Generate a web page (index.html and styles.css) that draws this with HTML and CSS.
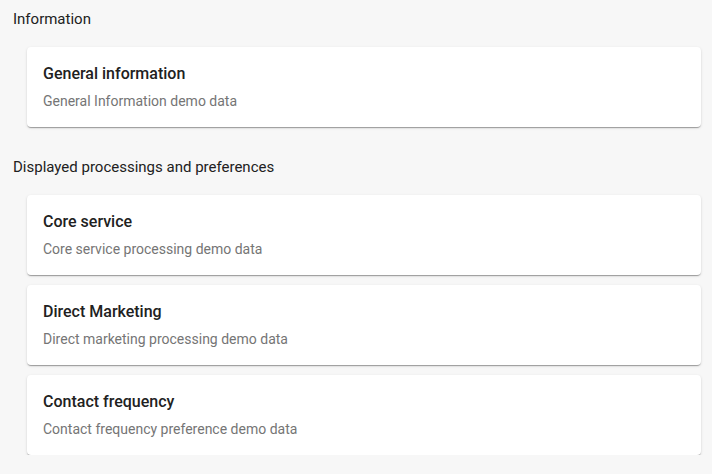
FILE: index.html
```html
<!DOCTYPE html>
<html lang="en">
<head>
<meta charset="utf-8">
<link rel="stylesheet" href="styles.css">
</head>
<body>
<main class="page">
  <section class="section">
    <h2 class="section-title">Information</h2>
    <div class="card-list">
      <div class="card">
        <div class="card-title">General information</div>
        <div class="card-subtitle">General Information demo data</div>
      </div>
    </div>
  </section>
  <section class="section">
    <h2 class="section-title">Displayed processings and preferences</h2>
    <div class="card-list">
      <div class="card">
        <div class="card-title">Core service</div>
        <div class="card-subtitle">Core service processing demo data</div>
      </div>
      <div class="card">
        <div class="card-title">Direct Marketing</div>
        <div class="card-subtitle">Direct marketing processing demo data</div>
      </div>
      <div class="card">
        <div class="card-title">Contact frequency</div>
        <div class="card-subtitle">Contact frequency preference demo data</div>
      </div>
    </div>
  </section>
</main>
</body>
</html>
```
FILE: styles.css
```css
html, body {
  margin: 0;
  padding: 0;
  background: #f7f7f7;
  font-family: Roboto, "Noto Sans", sans-serif;
  color: #212121;
}
.page {
  padding: 9px 11px 0 13px;
  display: flex;
  flex-direction: column;
  gap: 30px;
}
.section-title {
  margin: 0 0 18px 0;
  font-size: 15px;
  font-weight: 400;
  line-height: 20px;
  color: #212121;
}
.card-list {
  display: flex;
  flex-direction: column;
  gap: 10px;
  margin-left: 14px;
}
.card {
  background: #fff;
  border-radius: 4px;
  padding: 17px 16px 16px;
  box-shadow: 0 2px 1px -1px rgba(0,0,0,0.2), 0 1px 1px 0 rgba(0,0,0,0.14), 0 1px 3px 0 rgba(0,0,0,0.12);
}
.card-title {
  font-size: 16px;
  font-weight: 500;
  line-height: 20px;
  color: #212121;
  margin-bottom: 7px;
}
.card-subtitle {
  font-size: 14px;
  line-height: 20px;
  color: #757575;
}
```
